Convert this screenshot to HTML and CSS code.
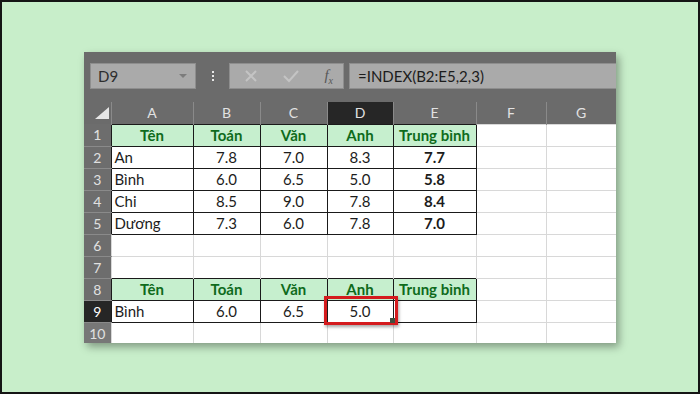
FILE: index.html
```html
<!DOCTYPE html>
<html lang="vi">
<head>
  <meta charset="UTF-8" />
  <title>Hàm INDEX</title>
  <link rel="stylesheet" href="styles.css">
</head>
<body>

  <div class="frame">
    <div class="excel">
      <div class="toolbar">
        <div class="namebox">
          <span>D9</span>
          <span class="caret"></span>
        </div>
        <div class="dots"><i></i><i></i><i></i></div>
        <div class="fxbox">
          <svg class="ico" width="14" height="14" viewBox="0 0 14 14">
            <path d="M2 2 L12 12 M12 2 L2 12" stroke="#c4c4c4" stroke-width="2" fill="none" />
          </svg>
          <svg class="ico" width="16" height="14" viewBox="0 0 16 14">
            <path d="M1 7 L6 12 L15 2" stroke="#c4c4c4" stroke-width="2" fill="none" />
          </svg>
          <span class="fx">f<sub>x</sub></span>
        </div>
        <div class="formula">=INDEX(B2:E5,2,3)</div>
      </div>

      <table class="sheet">
        <colgroup>
          <col style="width:27px">
          <col style="width:82px">
          <col style="width:67px">
          <col style="width:67px">
          <col style="width:66px">
          <col style="width:83px">
          <col style="width:70px">
          <col style="width:70px">
        </colgroup>
        <tr class="cols">
          <th class="corner">
            <svg width="27" height="21" viewBox="0 0 27 21">
              <polygon points="11,16 25,16 25,4" fill="#e6e6e6" />
            </svg>
          </th>
          <th>A</th><th>B</th><th>C</th><th class="on">D</th><th>E</th><th>F</th><th>G</th>
        </tr>
        <tr>
          <td class="rh">1</td>
          <td class="b hd">Tên</td><td class="b hd">Toán</td><td class="b hd">Văn</td><td class="b hd">Anh</td><td class="b hd">Trung bình</td>
          <td></td><td></td>
        </tr>
        <tr>
          <td class="rh">2</td>
          <td class="b">An</td><td class="b n">7.8</td><td class="b n">7.0</td><td class="b n">8.3</td><td class="b n bold">7.7</td>
          <td></td><td></td>
        </tr>
        <tr>
          <td class="rh">3</td>
          <td class="b">Bình</td><td class="b n">6.0</td><td class="b n">6.5</td><td class="b n">5.0</td><td class="b n bold">5.8</td>
          <td></td><td></td>
        </tr>
        <tr>
          <td class="rh">4</td>
          <td class="b">Chi</td><td class="b n">8.5</td><td class="b n">9.0</td><td class="b n">7.8</td><td class="b n bold">8.4</td>
          <td></td><td></td>
        </tr>
        <tr>
          <td class="rh">5</td>
          <td class="b">Dương</td><td class="b n">7.3</td><td class="b n">6.0</td><td class="b n">7.8</td><td class="b n bold">7.0</td>
          <td></td><td></td>
        </tr>
        <tr>
          <td class="rh">6</td>
          <td></td><td></td><td></td><td></td><td></td><td></td><td></td>
        </tr>
        <tr>
          <td class="rh">7</td>
          <td class="open"></td><td class="open"></td><td class="open"></td><td class="open"></td><td class="open"></td><td></td><td></td>
        </tr>
        <tr>
          <td class="rh">8</td>
          <td class="b hd">Tên</td><td class="b hd">Toán</td><td class="b hd">Văn</td><td class="b hd">Anh</td><td class="b hd">Trung bình</td>
          <td></td><td></td>
        </tr>
        <tr>
          <td class="rh on">9</td>
          <td class="b">Bình</td><td class="b n">6.0</td><td class="b n">6.5</td>
          <td class="b n sel">5.0<span class="selbox"></span><span class="handle"></span></td>
          <td class="b"></td>
          <td></td><td></td>
        </tr>
        <tr>
          <td class="rh light">10</td>
          <td></td><td></td><td></td><td></td><td></td><td></td><td></td>
        </tr>
      </table>
    </div>
  </div>

</body>
</html>
```

FILE: styles.css
```css
body {
  margin: 0;
  font-family: Lato, "Open Sans", sans-serif;
}

.frame {
  box-sizing: border-box;
  width: 700px;
  height: 394px;
  border: 2px solid #151515;
  background-color: #c8eeca;
  padding: 50px 0 0 82px;
}

.excel {
  width: 532px;
  height: 291px;
  overflow: hidden;
  background-color: #6b6b6b;
  box-shadow: 3px 4px 8px rgba(0, 0, 0, 0.35);
}

/* formula bar */
.toolbar {
  display: flex;
  height: 50px;
  box-sizing: border-box;
  padding: 11px 0 0 6px;
}

.namebox,
.fxbox,
.formula {
  box-sizing: border-box;
  height: 26px;
  background-color: #aaaaaa;
  border: 1px solid #8e8e8e;
  display: flex;
  align-items: center;
}

.namebox {
  width: 106px;
  padding: 0 8px 0 7px;
  justify-content: space-between;
  font-size: 15px;
  color: #2e2e2e;
}

.caret {
  width: 0;
  height: 0;
  border-left: 4px solid transparent;
  border-right: 4px solid transparent;
  border-top: 4px solid #7c7c7c;
}

.dots {
  width: 33px;
  display: flex;
  flex-direction: column;
  align-items: center;
  justify-content: center;
  gap: 2px;
  height: 26px;
}

.dots i {
  display: block;
  width: 2px;
  height: 2px;
  background-color: #e8e8e8;
}

.fxbox {
  width: 115px;
  padding: 0 10px 0 14px;
  justify-content: space-between;
}

.fx {
  font-family: "Liberation Serif", serif;
  font-style: italic;
  font-size: 15px;
  color: #575757;
}

.fx sub {
  font-size: 10px;
}

.formula {
  flex: 1;
  margin-left: 5px;
  margin-right: -4px;
  padding-left: 8px;
  font-size: 15px;
  color: #1c1c1c;
}

/* grid */
.sheet {
  width: 532px;
  table-layout: fixed;
  border-collapse: collapse;
  background-color: #ffffff;
}

.sheet th {
  height: 21px;
  padding: 0;
  border: none;
  border-right: 1px solid #8a8a8a;
  background-color: #6b6b6b;
  color: #e2e2e2;
  font-size: 14px;
  font-weight: normal;
}

.sheet th.corner {
  line-height: 0;
}

.sheet th.on {
  background-color: #262626;
}

.sheet tr {
  height: 22px;
}

.sheet td {
  padding: 0 3px;
  border: 1px solid #d8d8d8;
  font-size: 15px;
  color: #1c1c1c;
  white-space: nowrap;
  overflow: hidden;
}

.sheet td.rh {
  padding: 0;
  border: none;
  border-bottom: 1px solid #8a8a8a;
  background-color: #6d6d6d;
  color: #e0e0e0;
  font-size: 14px;
  text-align: center;
}

.sheet td.rh.on {
  background-color: #262626;
  color: #ffffff;
}

.sheet td.rh.light {
  background-color: #777777;
}

.sheet td.b {
  border-color: #1a1a1a;
}

.sheet td.open {
  border-bottom: none;
}

.sheet td.hd {
  background-color: #c6efce;
  color: #0f6b1c;
  font-weight: bold;
  text-align: center;
}

.sheet td.n {
  text-align: center;
}

.sheet td.bold {
  font-weight: bold;
}

.sheet td.sel {
  position: relative;
  overflow: visible;
}

.selbox {
  position: absolute;
  left: -4px;
  top: -5px;
  right: -5px;
  bottom: -3px;
  border: 3px solid #d41b1e;
  box-shadow: 1px 2px 3px rgba(0, 0, 0, 0.35);
}

.handle {
  position: absolute;
  right: -2px;
  bottom: -1px;
  width: 5px;
  height: 5px;
  background-color: #3f4f3f;
}
```
